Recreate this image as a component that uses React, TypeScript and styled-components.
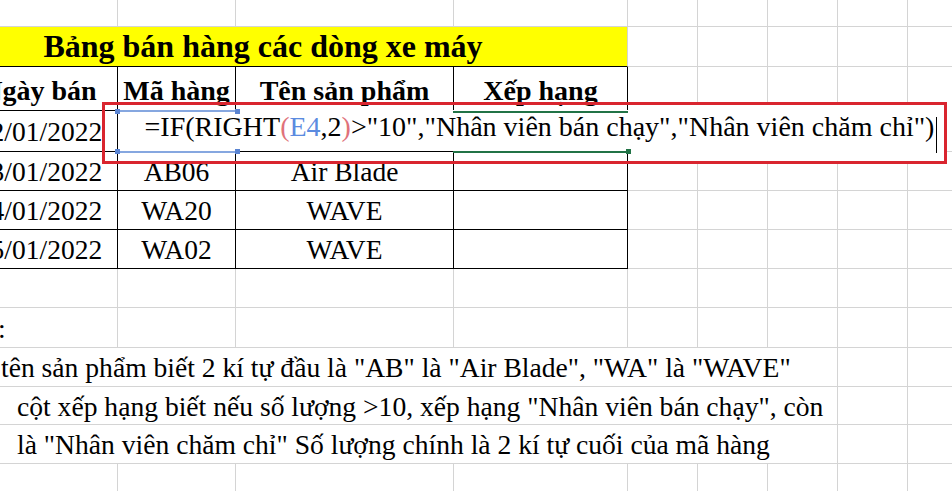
import React from "react";
import styled, { createGlobalStyle } from "styled-components";

const GRID = "#d4d4d4";
const INK = "#000";
const SERIF = `"Liberation Serif", "Times New Roman", serif`;

const GlobalStyle = createGlobalStyle`
  html, body { margin: 0; padding: 0; background: #fff; }
  body { width: 952px; height: 491px; overflow: hidden; font-family: ${SERIF}; }
`;

const Sheet = styled.div`
  position: relative;
  width: 952px;
  height: 491px;
  overflow: hidden;
  background: #fff;
  color: #000;
  font-family: ${SERIF};
`;

const Grid = styled.div`
  display: grid;
  grid-template-columns: 156px 118px 218px 174px repeat(5, 70px);
  grid-template-rows: 27px 40px 44px 41px 39px 39px 39px 39px 40px 39px 38px 39px 39px;
  margin-left: -38px;
  width: max-content;
`;

type Line = "ink" | "grid";
const lineColor = (l?: Line) => (l === "ink" ? INK : GRID);

const Cell = styled.div<{ $r?: Line; $b?: Line; $span?: number }>`
  box-sizing: border-box;
  grid-column: span ${(p) => p.$span ?? 1};
  border-right: 1px solid ${(p) => lineColor(p.$r)};
  border-bottom: 1px solid ${(p) => lineColor(p.$b)};
  background: #fff;
  display: flex;
  align-items: center;
  justify-content: center;
  white-space: nowrap;
  min-width: 0;
  font-size: 27.5px;
  line-height: normal;
`;

const TitleCell = styled(Cell)`
  background: #ffff00;
  font-size: 32px;
  font-weight: 700;
  padding-right: 63px;
`;

const HeadCell = styled(Cell)`
  font-size: 28px;
  font-weight: 700;
  padding-top: 4px;
`;

const DataCell = styled(Cell)`
  padding-top: 2px;
`;

const NoteCell = styled(Cell)<{ $indent: number }>`
  justify-content: flex-start;
  padding-left: ${(p) => p.$indent}px;
  padding-top: 2px;
  font-size: 27.6px;
`;

const EditorMask = styled.div`
  position: absolute;
  left: 628px;
  top: 104px;
  width: 316px;
  height: 57px;
  background: #fff;
`;

const Editor = styled.div`
  position: absolute;
  left: 118px;
  top: 110px;
  width: 846px;
  height: 41px;
  box-sizing: border-box;
  padding-top: 2px;
  background: #fff;
  text-align: center;
  white-space: nowrap;
  font-size: 28px;
  line-height: 30px;
`;

const Paren = styled.span`
  color: #e0727a;
`;

const Ref = styled.span`
  color: #5b8be0;
`;

const Caret = styled.span`
  display: inline-block;
  width: 0;
  height: 36px;
  margin-left: 2px;
  border-left: 1px solid #000;
  vertical-align: -17px;
`;

const RefBox = styled.div`
  position: absolute;
  left: 117px;
  top: 110px;
  width: 120px;
  height: 43px;
  box-sizing: border-box;
  border-top: 2px solid #86a7e0;
  border-bottom: 2px solid #86a7e0;
`;

const ActiveBox = styled.div`
  position: absolute;
  left: 453px;
  top: 111px;
  width: 175px;
  height: 42px;
  box-sizing: border-box;
  border-top: 2px solid #217346;
  border-bottom: 2px solid #217346;
`;

const Handle = styled.span<{ $x: "l" | "r"; $y: "t" | "b"; $c: string }>`
  position: absolute;
  width: 5px;
  height: 5px;
  background: ${(p) => p.$c};
  ${(p) => (p.$x === "l" ? "left: -2px;" : "right: -3px;")}
  ${(p) => (p.$y === "t" ? "top: -3px;" : "bottom: -3px;")}
`;

const Annotation = styled.div`
  position: absolute;
  left: 102px;
  top: 102px;
  width: 845px;
  height: 62px;
  box-sizing: border-box;
  border: 3px solid #d9252f;
`;

const header = ["Ngày bán", "Mã hàng", "Tên sản phẩm", "Xếp hạng"];
const rows = [
  ["02/01/2022", "", "", ""],
  ["03/01/2022", "AB06", "Air Blade", ""],
  ["04/01/2022", "WA20", "WAVE", ""],
  ["05/01/2022", "WA02", "WAVE", ""],
];

const notes: { text: string; indent: number }[] = [
  { text: 'tên sản phẩm biết 2 kí tự đầu là "AB" là "Air Blade", "WA" là "WAVE"', indent: 39 },
  { text: 'cột xếp hạng biết nếu số lượng >10, xếp hạng "Nhân viên bán chạy", còn', indent: 55 },
  { text: 'là "Nhân viên chăm chỉ" Số lượng chính là 2 kí tự cuối của mã hàng', indent: 55 },
];

const blanks = (n: number, key: string) =>
  Array.from({ length: n }, (_, i) => <Cell key={`${key}-${i}`} />);

export default function App() {
  return (
    <>
      <GlobalStyle />
      <Sheet>
        <Grid>
          {blanks(9, "r0")}

          <TitleCell $span={4} $b="ink">
            Bảng bán hàng các dòng xe máy
          </TitleCell>
          {blanks(5, "r1")}

          {header.map((h) => (
            <HeadCell key={h} $r="ink" $b="ink">
              {h}
            </HeadCell>
          ))}
          {blanks(5, "r2")}

          {rows.map((r, ri) => (
            <React.Fragment key={ri}>
              {r.map((v, ci) => (
                <DataCell key={ci} $r="ink" $b="ink">
                  {v}
                </DataCell>
              ))}
              {blanks(5, `d${ri}`)}
            </React.Fragment>
          ))}

          {blanks(9, "r7")}

          <NoteCell $indent={36}>:</NoteCell>
          {blanks(8, "r8")}

          {notes.map((n, i) => (
            <React.Fragment key={i}>
              <NoteCell $span={7} $indent={n.indent}>
                {n.text}
              </NoteCell>
              {blanks(2, `n${i}`)}
            </React.Fragment>
          ))}

          {blanks(9, "r12")}
          {blanks(9, "r13")}
        </Grid>

        <EditorMask />
        <Editor>
          =IF(RIGHT<Paren>(</Paren>
          <Ref>E4</Ref>,2<Paren>)</Paren>&gt;"10","Nhân viên bán chạy","Nhân viên chăm chỉ")
          <Caret />
        </Editor>

        <RefBox>
          <Handle $x="l" $y="t" $c="#5a84d2" />
          <Handle $x="r" $y="t" $c="#5a84d2" />
          <Handle $x="l" $y="b" $c="#5a84d2" />
          <Handle $x="r" $y="b" $c="#5a84d2" />
        </RefBox>
        <ActiveBox>
          <Handle $x="r" $y="b" $c="#217346" />
        </ActiveBox>

        <Annotation />
      </Sheet>
    </>
  );
}
